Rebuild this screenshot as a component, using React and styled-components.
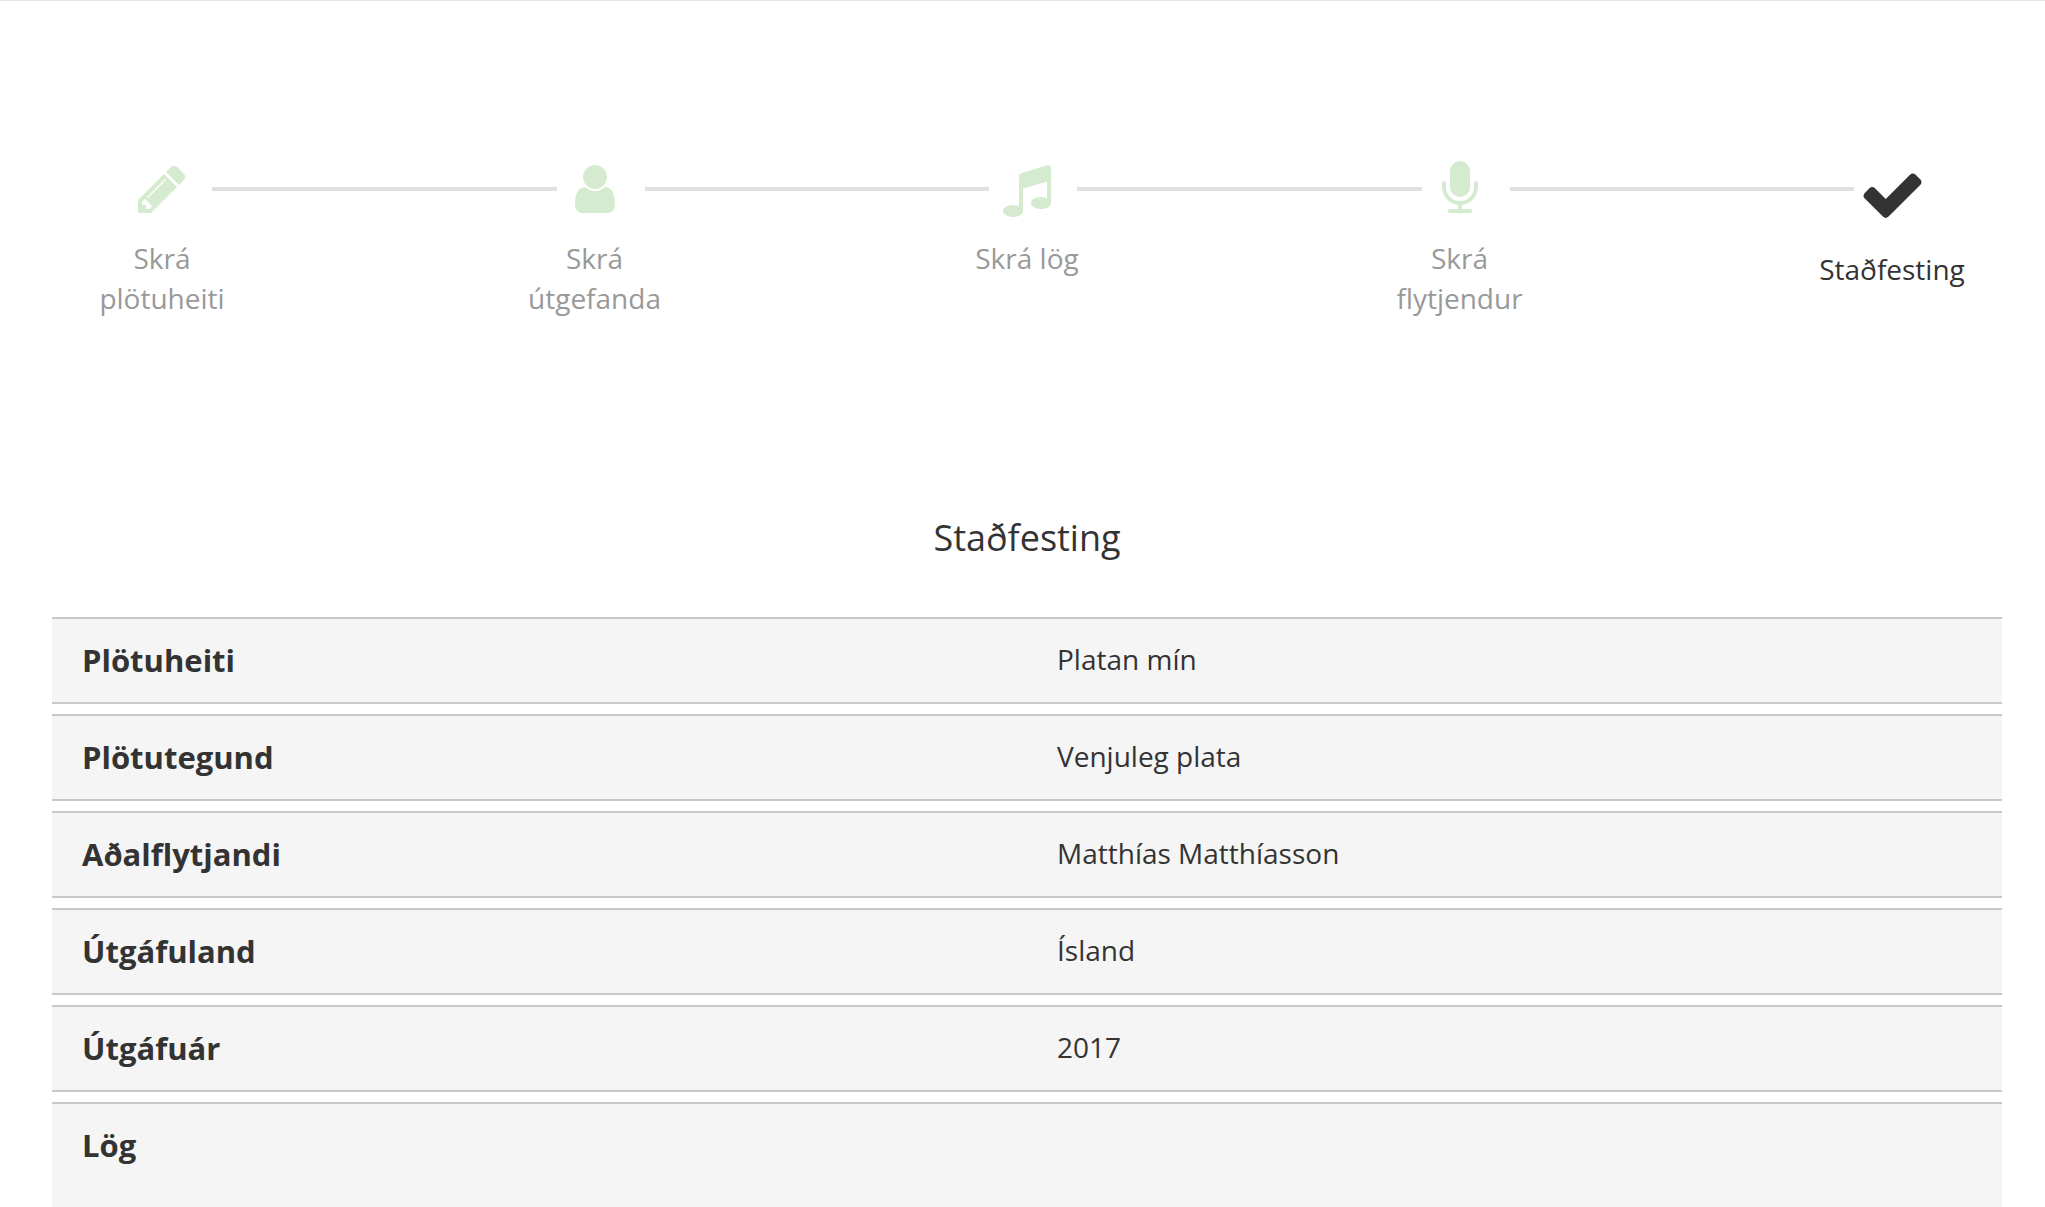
import React, { Fragment } from "react";
import styled, { createGlobalStyle } from "styled-components";

const GlobalStyle = createGlobalStyle`
  *, *::before, *::after { box-sizing: border-box; }
  body {
    margin: 0;
    background: #fff;
    color: #333;
    font-family: "Open Sans", "Noto Sans", sans-serif;
    font-size: 28px;
    line-height: 40px;
  }
`;

const Page = styled.main`
  height: 100vh;
  overflow: hidden;
  border-top: 1px solid #e5e5e5;
  padding: 160px 43px 0 52px;
`;

const Steps = styled.ol`
  display: flex;
  align-items: flex-start;
  list-style: none;
  margin: 0;
  padding: 0 35px;
  height: 351px;
`;

const Step = styled.li`
  flex: none;
  width: 150px;
  display: flex;
  flex-direction: column;
  align-items: center;
  gap: 21px;
  text-align: center;
  color: ${(p) => (p.$active ? "#333" : "#999")};
`;

const StepIcon = styled.svg`
  display: block;
  width: ${(p) => (p.$active ? 67 : 56)}px;
  height: ${(p) => (p.$active ? 67 : 56)}px;
  fill: ${(p) => (p.$active ? "#333" : "#d5ebcf")};
`;

const Connector = styled.li`
  flex: 1;
  height: 4px;
  margin: 26px -37px 0 -25px;
  background: #e0e0e0;
`;

const Title = styled.h1`
  margin: 0;
  font-size: 36px;
  font-weight: 400;
  line-height: 52px;
  text-align: center;
`;

const Summary = styled.table`
  width: 100%;
  margin-top: 43px;
  table-layout: fixed;
  border-collapse: separate;
  border-spacing: 0 10px;
  text-align: left;

  th, td {
    padding: 20px 30px;
    vertical-align: top;
    background: #f5f5f5;
    border: solid #c8c8c8;
    border-width: 2px 0;
  }
`;

const Row = styled.tr`
  height: ${(p) => (p.$tall ? "160px" : "auto")};
`;

const Name = styled.th`
  font-size: 31px;
  line-height: 43px;
  font-weight: 700;
`;

const Value = styled.td`
  font-size: 28px;
  line-height: 40px;
`;

const steps = [
  {
    label: "Skrá plötuheiti",
    path: "M491 1536l91-91-235-235-91 91v107h128v128h107zm523-928q0-22-22-22-10 0-17 7l-542 542q-7 7-7 17 0 22 22 22 10 0 17-7l542-542q7-7 7-17zm-54-192l416 416-832 832h-416v-416zm683 96q0 53-37 90l-166 166-416-416 166-165q36-38 90-38 53 0 91 38l235 234q37 39 37 91z",
  },
  {
    label: "Skrá útgefanda",
    path: "M1536 1399q0 109-62.5 187t-150.5 78h-854q-88 0-150.5-78t-62.5-187q0-85 8.5-160.5t31.5-152 58.5-131 94-89 134.5-34.5q131 128 313 128t313-128q76 0 134.5 34.5t94 89 58.5 131 31.5 152 8.5 160.5zm-256-887q0 159-112.5 271.5t-271.5 112.5-271.5-112.5-112.5-271.5 112.5-271.5 271.5-112.5 271.5 112.5 112.5 271.5z",
  },
  {
    label: "Skrá lög",
    path: "M1664 224v1120q0 50-34 89t-86 60.5-103.5 32-96.5 10.5-96.5-10.5-103.5-32-86-60.5-34-89 34-89 86-60.5 103.5-32 96.5-10.5q105 0 192 39v-537l-768 237v709q0 50-34 89t-86 60.5-103.5 32-96.5 10.5-96.5-10.5-103.5-32-86-60.5-34-89 34-89 86-60.5 103.5-32 96.5-10.5q105 0 192 39v-967q0-31 19-56.5t49-35.5l832-256q12-4 28-4 40 0 68 28t28 68z",
  },
  {
    label: "Skrá flytjendur",
    path: "M1472 704v128q0 221-147.5 384.5t-364.5 187.5v132h256q26 0 45 19t19 45-19 45-45 19h-640q-26 0-45-19t-19-45 19-45 45-19h256v-132q-217-24-364.5-187.5t-147.5-384.5v-128q0-26 19-45t45-19 45 19 19 45v128q0 185 131.5 316.5t316.5 131.5 316.5-131.5 131.5-316.5v-128q0-26 19-45t45-19 45 19 19 45zm-256-384v512q0 132-94 226t-226 94-226-94-94-226v-512q0-132 94-226t226-94 226 94 94 226z",
  },
  {
    label: "Staðfesting",
    active: true,
    path: "M1671 566q0 40-28 68l-724 724-136 136q-28 28-68 28t-68-28l-136-136-362-362q-28-28-28-68t28-68l136-136q28-28 68-28t68 28l294 295 656-657q28-28 68-28t68 28l136 136q28 28 28 68z",
  },
];

const rows = [
  ["Plötuheiti", "Platan mín"],
  ["Plötutegund", "Venjuleg plata"],
  ["Aðalflytjandi", "Matthías Matthíasson"],
  ["Útgáfuland", "Ísland"],
  ["Útgáfuár", "2017"],
  ["Lög", ""],
];

export default function App() {
  return (
    <Page>
      <GlobalStyle />
      <Steps>
        {steps.map((step, i) => (
          <Fragment key={step.label}>
            {i > 0 && <Connector aria-hidden="true" />}
            <Step $active={step.active} aria-current={step.active ? "step" : undefined}>
              <StepIcon $active={step.active} viewBox="0 0 1792 1792" aria-hidden="true">
                <path d={step.path} />
              </StepIcon>
              <span>{step.label}</span>
            </Step>
          </Fragment>
        ))}
      </Steps>
      <Title>Staðfesting</Title>
      <Summary>
        <tbody>
          {rows.map(([name, value]) => (
            <Row key={name} $tall={!value}>
              <Name scope="row">{name}</Name>
              <Value>{value}</Value>
            </Row>
          ))}
        </tbody>
      </Summary>
    </Page>
  );
}
